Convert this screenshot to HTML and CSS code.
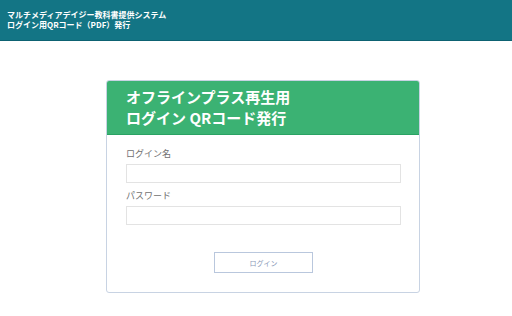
FILE: index.html
```html
<!DOCTYPE html>
<html lang="ja">
<head>
  <meta charset="UTF-8">
  <meta name="viewport" content="width=device-width, initial-scale=1.0">
  <title>ログイン用QRコード（PDF）発行</title>
  <link rel="stylesheet" href="styles.css">
</head>
<body>
  <header class="topbar">
    <div class="topbar-line">マルチメディアデイジー教科書提供システム</div>
    <div class="topbar-line">ログイン用QRコード（PDF）発行</div>
  </header>
  <main class="page">
    <div class="card">
      <div class="card-head">オフラインプラス再生用<br>ログイン QRコード発行</div>
      <form class="card-body">
        <label class="field-label">ログイン名</label>
        <input class="field-input" type="text">
        <label class="field-label">パスワード</label>
        <input class="field-input" type="password">
        <div class="actions">
          <button class="btn" type="button">ログイン</button>
        </div>
      </form>
    </div>
  </main>
</body>
</html>
```

FILE: styles.css
```css
html,
body {
  height: 100%;
  overflow: hidden;
}

body {
  margin: 0;
  background: #fff;
  font-family: "Noto Sans CJK JP", "Noto Sans", sans-serif;
}

.topbar {
  height: 41px;
  background: #137585;
  border-bottom: 1px solid #0d6272;
  box-sizing: border-box;
  padding: 10px 0 0 7px;
}

.topbar-line {
  color: #fff;
  font-size: 8px;
  font-weight: bold;
  line-height: 9.5px;
}

.page {
  padding: 39px 0 0 106px;
}

.card {
  width: 314px;
  border: 1px solid #c8d3e3;
  border-radius: 3px;
  box-sizing: border-box;
  overflow: hidden;
}

.card-head {
  background: #3bb273;
  border-bottom: 1px solid #2aa263;
  color: #fff;
  font-size: 15px;
  font-weight: bold;
  line-height: 21px;
  padding: 5px 0 6px 19px;
}

.card-body {
  display: flex;
  flex-direction: column;
  padding: 13px 18px 19px 19px;
}

.field-label {
  color: #707070;
  font-size: 9px;
  line-height: 12px;
  margin-bottom: 4px;
}

.field-input {
  height: 19px;
  border: 1px solid #e3e3e3;
  box-sizing: border-box;
  margin: 0 0 7px;
  padding: 0;
  outline: none;
}

.actions {
  display: flex;
  justify-content: center;
  padding-top: 20px;
}

.btn {
  width: 99px;
  height: 21px;
  background: #fff;
  border: 1px solid #b9c7dd;
  color: #8a99b8;
  font: 7px "Noto Sans CJK JP", sans-serif;
  padding: 0;
}
```
